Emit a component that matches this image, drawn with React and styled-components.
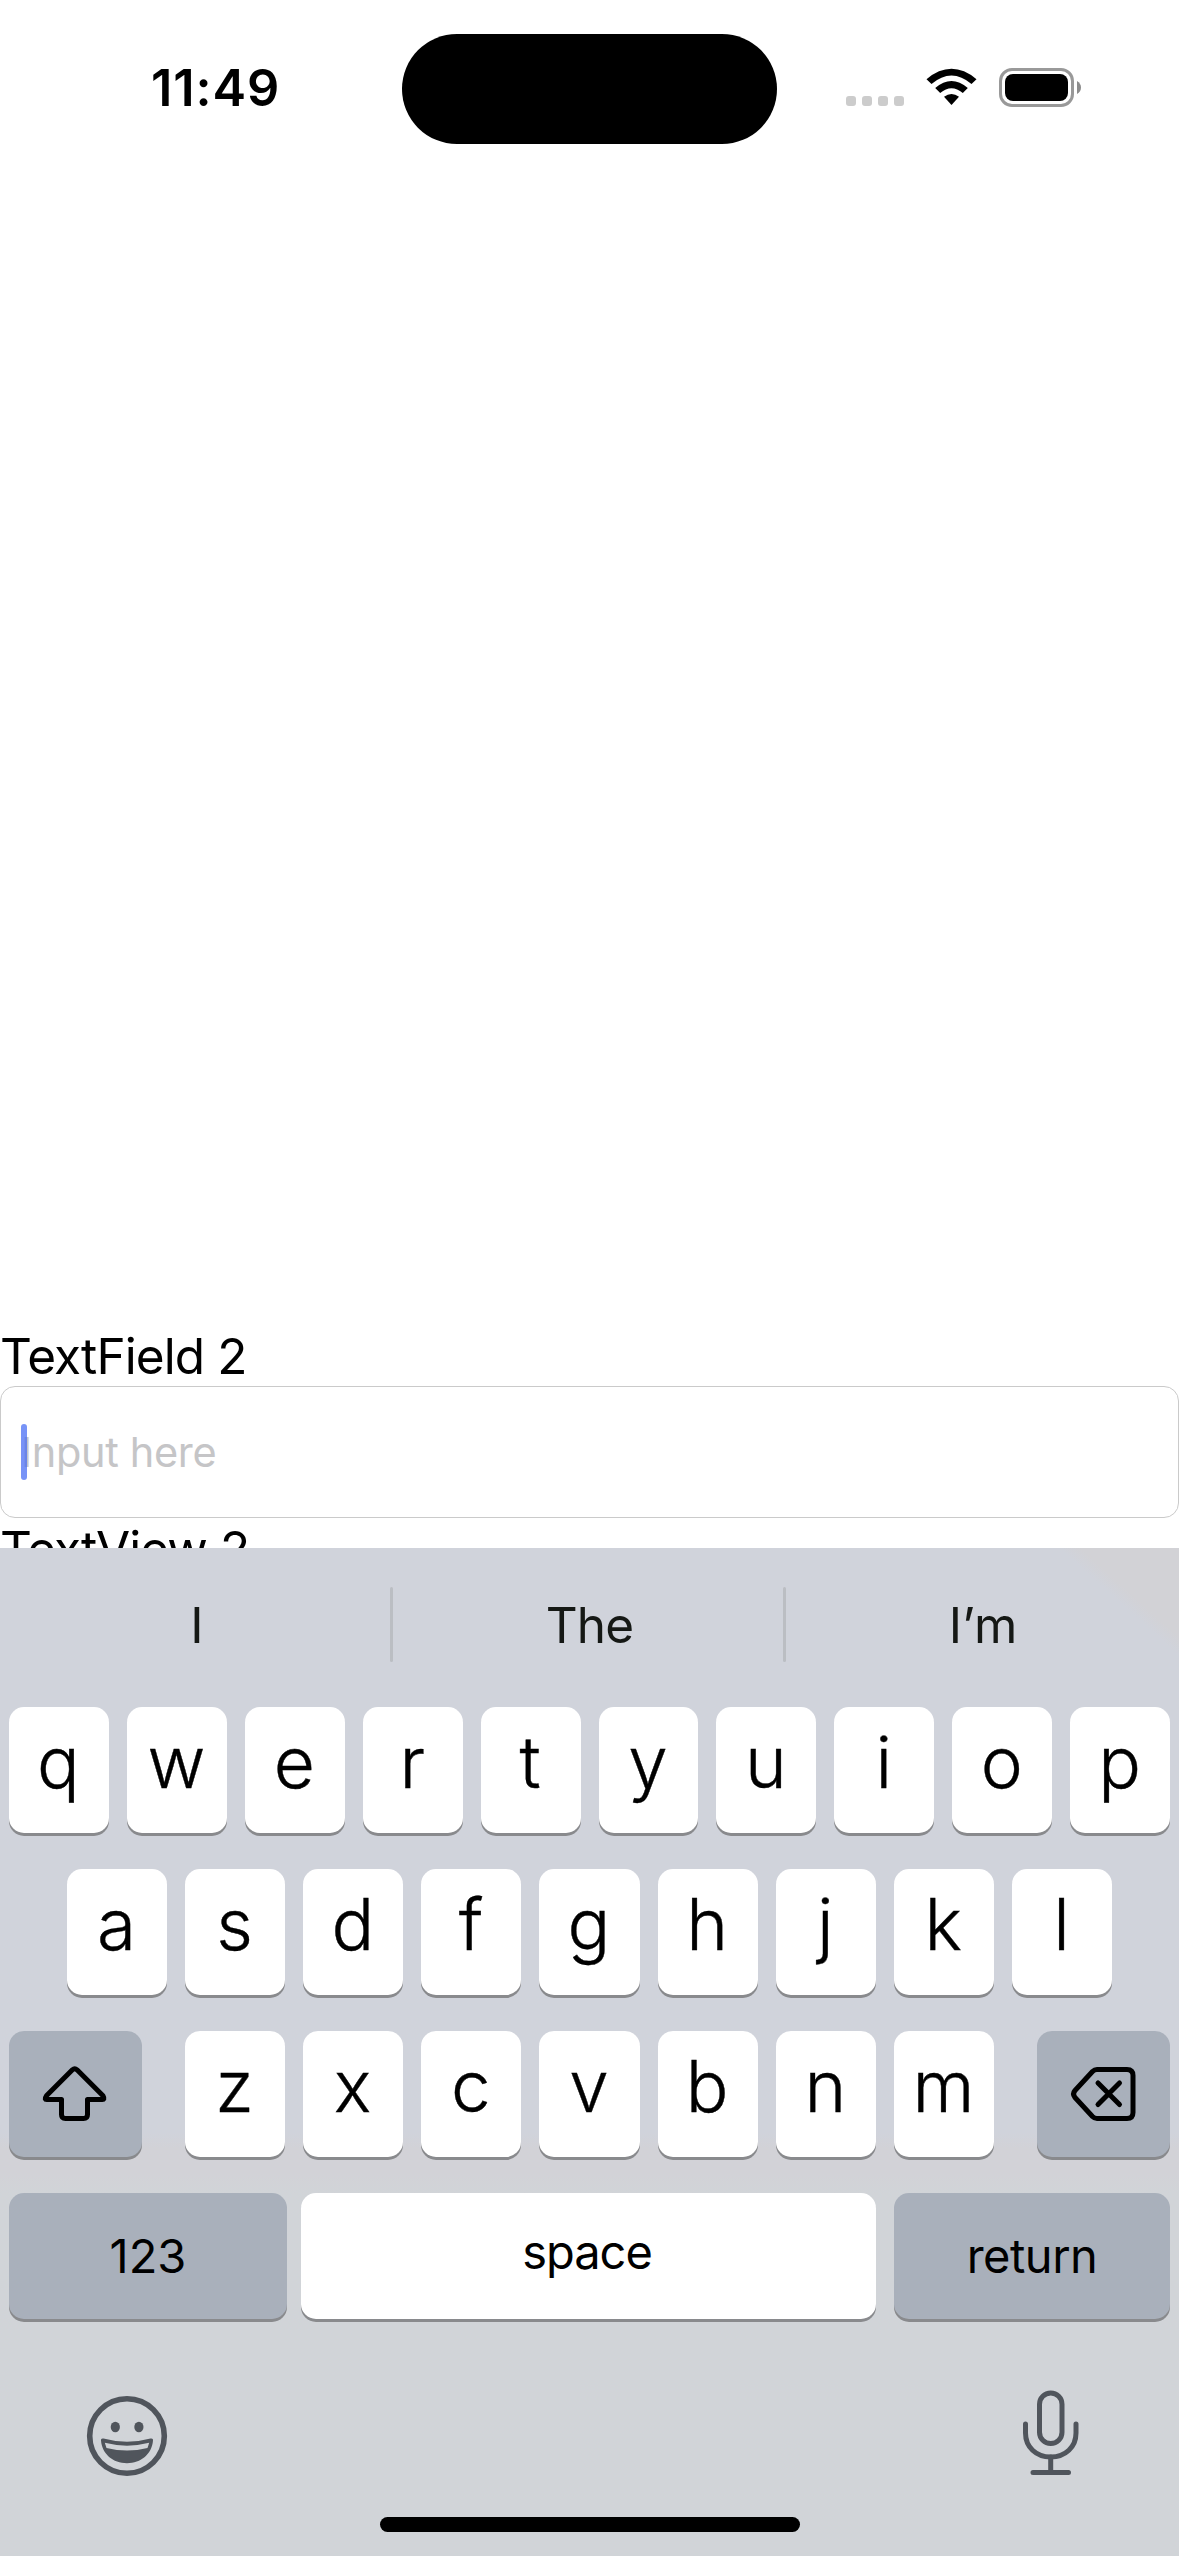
import React from "react";
import styled, { createGlobalStyle } from "styled-components";

const Global = createGlobalStyle`
  html, body { margin: 0; padding: 0; background: #fff; }
  * { box-sizing: border-box; }
`;

const Screen = styled.div`
  width: 1179px;
  height: 2556px;
  display: flex;
  flex-direction: column;
  overflow: hidden;
  background: #fff;
  color: #000;
  font-family: Inter, "Liberation Sans", sans-serif;
  font-kerning: normal;
`;

const StatusBar = styled.header`
  height: 177px;
  flex: none;
  display: grid;
  grid-template-columns: 402px 375px 402px;
  padding-top: 33px;
`;

const Clock = styled.time`
  padding-left: 151px;
  font-size: 50.5px;
  line-height: 60px;
  font-weight: 600;
  letter-spacing: 0.9px;
  margin-top: 25px;
`;

const Island = styled.div`
  height: 110.4px;
  margin-top: 0.7px;
  border-radius: 56px;
  background: #000;
`;

const Indicators = styled.div`
  display: flex;
  align-items: flex-start;
  padding: 35px 0 0 69px;
`;

const Dots = styled.div`
  display: flex;
  gap: 6px;
  margin: 28px 22px 0 0;
`;

const Dot = styled.i`
  width: 10px;
  height: 10px;
  border-radius: 3px;
  background: #ccc;
`;

const Signal = styled.div`
  display: flex;
  gap: 22px;
`;

const Content = styled.main`
  height: 1371px;
  flex: none;
  overflow: hidden;
  padding-top: 1149px;
`;

const Label = styled.label`
  display: block;
  height: 60px;
  font-size: 49.5px;
  line-height: 60px;
  letter-spacing: -0.9px;
  white-space: pre;
`;

const Field = styled.div`
  display: flex;
  align-items: center;
  height: 132px;
  border: 1px solid #cacaca;
  border-radius: 15px;
  padding-left: 20px;
  margin-bottom: 1px;
`;

const Caret = styled.span`
  width: 6px;
  height: 56px;
  margin-right: -6px;
  border-radius: 3px;
  background: #4a70f5c0;
  z-index: 1;
`;

const Placeholder = styled.span`
  font-size: 41.5px;
  line-height: 50px;
  color: #c5c5c7;
  letter-spacing: -0.35px;
`;

const Keyboard = styled.section`
  flex: 1;
  display: flex;
  flex-direction: column;
  background:
    linear-gradient(222deg, #d2d2d6 0 66px, transparent 80px),
    linear-gradient(#d0d3db 0 585px, #d2d2d7 600px 625px, #d1d4d8 645px);
`;

const Suggestions = styled.div`
  height: 159px;
  flex: none;
  display: grid;
  grid-template-columns: 390px 3px 390px 3px 393px;
  padding-top: 39px;
`;

const Suggestion = styled.button`
  border: 0;
  background: none;
  padding: 0 0 0 ${(p) => p.$shift || 0}px;
  height: 75px;
  font: 400 49.5px/76px Inter, sans-serif;
  letter-spacing: ${(p) => p.$tracking || 0}px;
  color: #151815;
`;

const Divider = styled.i`
  height: 75px;
  border-radius: 1.5px;
  background: #bbbec3;
`;

const KeyRow = styled.div`
  display: flex;
  gap: 18px;
  flex: none;
  height: 126px;
  margin-bottom: 36px;
  padding: 0 ${(p) => p.$inset || 9}px;
`;

const Key = styled.button`
  flex: ${(p) => (p.$width ? `0 0 ${p.$width}px` : "1 1 0")};
  min-width: 0;
  height: 126px;
  border: 0;
  padding: 0;
  margin: ${(p) => p.$margin || "0"};
  border-radius: 15px;
  background: ${(p) => (p.$dark ? "#a9b0bb" : "#fff")};
  box-shadow: 0 3px 0 #898a8d;
  color: #000;
  display: flex;
  justify-content: center;
  align-items: flex-start;
  font-family: Inter, sans-serif;
`;

const Letter = styled.span`
  font-size: 71px;
  line-height: 86px;
  font-weight: 350;
  -webkit-text-stroke: 0.4px #000;
  letter-spacing: 1px;
  margin-top: 12px;
`;

const Word = styled.span`
  font-size: 47px;
  line-height: 56px;
  margin-top: ${(p) => p.$top}px;
  margin-right: ${(p) => p.$nudge || 0}px;
  letter-spacing: ${(p) => p.$tracking || 0}px;
`;

const KeyIcon = styled.svg`
  width: 133px;
  height: 126px;
  display: block;
  fill: none;
  stroke: #000;
  stroke-width: 5;
  stroke-linecap: round;
  stroke-linejoin: round;
`;

const Footer = styled.footer`
  display: flex;
  justify-content: space-between;
  height: 162px;
  flex: none;
  padding: 15px 59px 0 57px;
`;

const FooterIcon = styled.svg`
  width: 140px;
  height: 140px;
  fill: none;
  stroke: #50555c;
  stroke-linecap: round;
  stroke-linejoin: round;
`;

const HomeBar = styled.div`
  width: 420px;
  height: 15px;
  flex: none;
  border-radius: 8px;
  background: #000;
  margin: 0 auto;
`;

const Wifi = () => (
  <svg width="51" height="38" viewBox="0 0 51 38">
    <path d="M0.5 11.2 Q25.5 -9.5 50.5 11.2 L45.5 16 Q25.5 -1 5.5 16 Z" />
    <path d="M9.2 20 Q25.5 6 41.8 20 L36.8 25 Q25.5 15.5 14.2 25 Z" />
    <path d="M18 28.8 Q25.5 23.2 33 28.8 L25.5 37 Z" />
  </svg>
);

const Battery = () => (
  <svg width="84" height="39" viewBox="0 0 84 39">
    <rect x="1.5" y="1.5" width="72" height="36" rx="11.5" fill="none" stroke="#999" strokeWidth="3" />
    <rect x="6" y="6" width="63" height="27" rx="8" />
    <path d="M78 13 Q82 15.5 82 19.5 Q82 23.5 78 26 Z" fill="#8c8c8c" />
  </svg>
);

const Letters = ({ text }) =>
  text.split("").map((c) => (
    <Key key={c}>
      <Letter>{c}</Letter>
    </Key>
  ));

export default function App() {
  return (
    <Screen>
      <Global />
      <StatusBar>
        <Clock>11:49</Clock>
        <Island />
        <Indicators>
          <Dots>
            <Dot />
            <Dot />
            <Dot />
            <Dot />
          </Dots>
          <Signal>
            <Wifi />
            <Battery />
          </Signal>
        </Indicators>
      </StatusBar>
      <Content>
        <Label>TextField 2</Label>
        <Field>
          <Caret />
          <Placeholder>Input here</Placeholder>
        </Field>
        <Label>TextView 2</Label>
      </Content>
      <Keyboard>
        <Suggestions>
          <Suggestion $shift={4}>I</Suggestion>
          <Divider />
          <Suggestion $shift={3} $tracking={-0.9}>The</Suggestion>
          <Divider />
          <Suggestion $shift={1}>I’m</Suggestion>
        </Suggestions>
        <KeyRow>
          <Letters text="qwertyuiop" />
        </KeyRow>
        <KeyRow $inset={67}>
          <Letters text="asdfghjkl" />
        </KeyRow>
        <KeyRow>
          <Key $dark $width={133} $margin="0 25px 0 0">
            <KeyIcon viewBox="0 0 133 126">
              <path d="M63.4 38.8 Q65.7 36.7 68 38.8 L94 64.8 Q96.5 69 92.5 68.5 H78.5 V83.5 Q78.5 87.5 74.5 87.5 H56.5 Q52.5 87.5 52.5 83.5 V68.5 H38.5 Q34.5 69 37.4 64.8 Z" />
            </KeyIcon>
          </Key>
          <Letters text="zxcvbnm" />
          <Key $dark $width={133} $margin="0 0 0 25px">
            <KeyIcon viewBox="0 0 133 126">
              <path d="M60 38.5 H90 Q96 38.5 96 44.5 V81.5 Q96 87.5 90 87.5 H60 Q57.5 87.5 55.5 85.5 L38 66.5 Q35 63 38 59.5 L55.5 40.5 Q57.5 38.5 60 38.5 Z" />
              <path d="M61 52 L82.5 73.5 M82.5 52 L61 73.5" />
            </KeyIcon>
          </Key>
        </KeyRow>
        <KeyRow>
          <Key $dark $width={278} $margin="0 -4px 0 0">
            <Word $top={35}>123</Word>
          </Key>
          <Key>
            <Word $top={31} $tracking={-1} $nudge={3}>space</Word>
          </Key>
          <Key $dark $width={276}>
            <Word $top={35} $tracking={-0.5}>return</Word>
          </Key>
        </KeyRow>
        <Footer>
          <FooterIcon viewBox="0 0 140 140">
            <circle cx="70" cy="66" r="37.3" strokeWidth="5.6" />
            <g fill="#50555c" stroke="none">
              <ellipse cx="58.3" cy="57" rx="4.6" ry="5.3" />
              <ellipse cx="81.9" cy="57" rx="4.6" ry="5.3" />
              <path
                fillRule="evenodd"
                d="M44 70.5 Q43.5 68 46.5 68.5 Q70 75 93.5 68.5 Q96.5 68 96 70.5 C95 84 84 93.2 70 93.2 C56 93.2 45 84 44 70.5 Z M47.8 72.8 Q70 78.5 92.2 72.8 L90.5 78 Q70 83 49.5 78 Z"
              />
            </g>
          </FooterIcon>
          <FooterIcon viewBox="0 0 140 140">
            <g strokeWidth="5">
              <rect x="59.5" y="23" width="22.5" height="50.5" rx="11.25" />
              <path d="M45.5 54 V63 C45.5 77 56 87 70.7 87 C85.4 87 96 77 96 63 V54" />
              <path d="M70.7 87 V102 M53 102.4 H88.5" />
            </g>
          </FooterIcon>
        </Footer>
        <HomeBar />
      </Keyboard>
    </Screen>
  );
}
